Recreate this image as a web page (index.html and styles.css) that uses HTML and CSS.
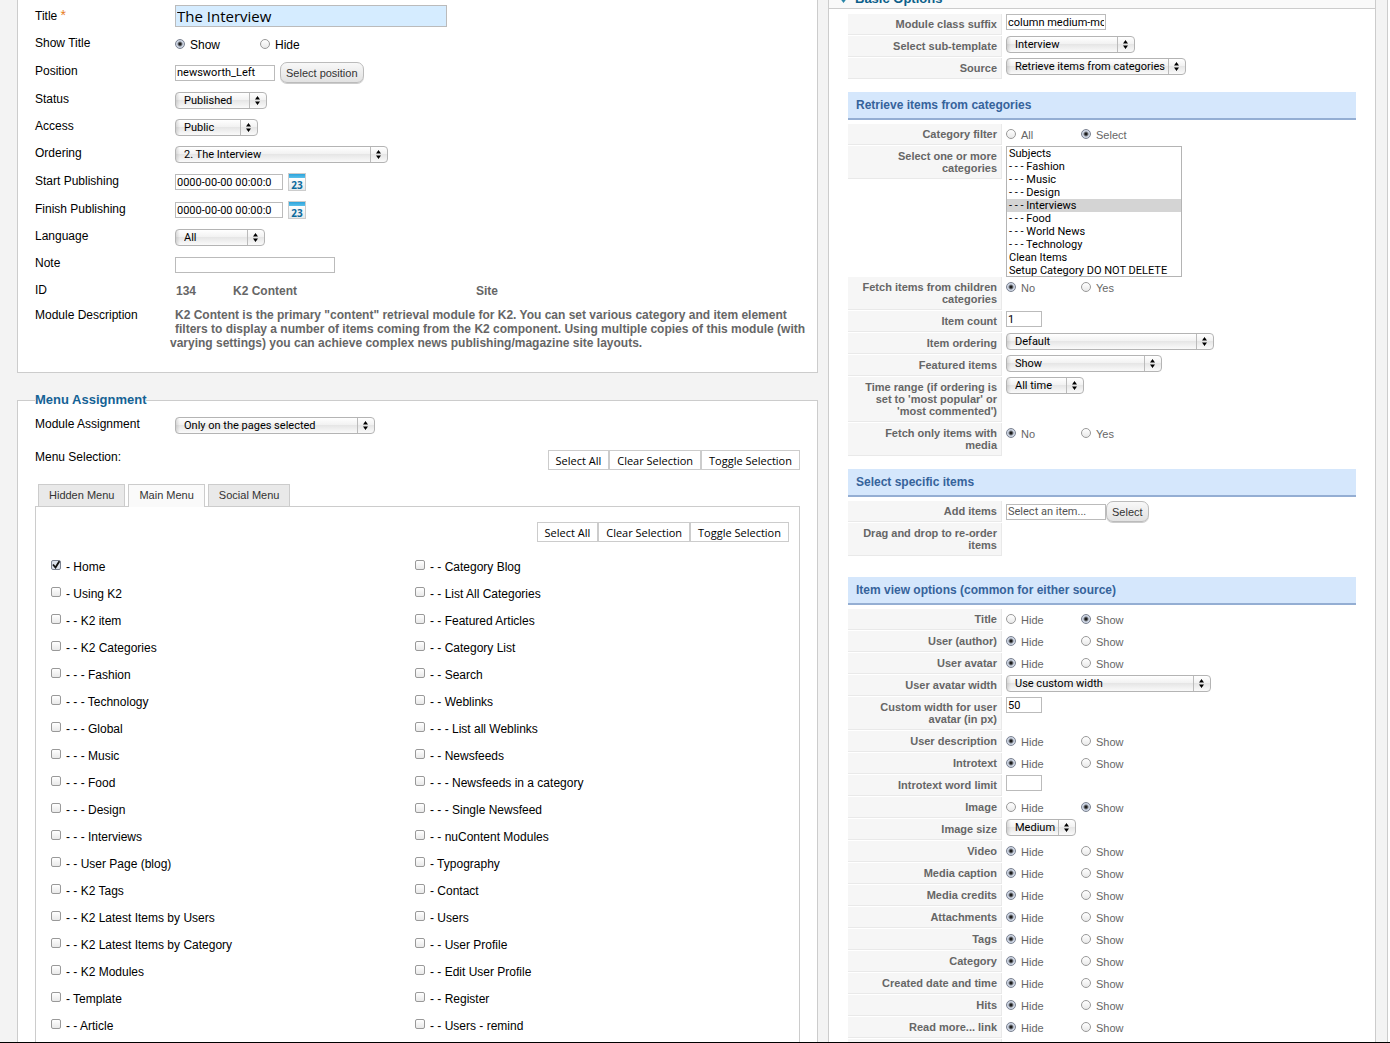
FILE: index.html
```html
<!DOCTYPE html>
<html lang="en">
<head>
  <meta charset="UTF-8" />
  <title>Module Manager - The Interview</title>
  <meta name="viewport" content="width=device-width, initial-scale=1.0" />
  <link rel="stylesheet" href="styles.css">
</head>
<body>
<form class="page">

  <!-- Left column -->
  <div class="col">
    <section class="details">
      <div class="field">
        <label for="title">Title <span class="star">*</span></label>
        <input type="text" id="title" class="text title" value="The Interview">
      </div>
      <div class="field" role="radiogroup" aria-label="Show Title">
        <span class="label">Show Title</span>
        <label class="opt wide"><input type="radio" name="showtitle" checked>Show</label>
        <label class="opt wide"><input type="radio" name="showtitle">Hide</label>
      </div>
      <div class="field tall">
        <label for="position">Position</label>
        <input type="text" id="position" class="text medium" value="newsworth_Left">
        <button type="button" class="btn">Select position</button>
      </div>
      <div class="field">
        <label for="status">Status</label>
        <select id="status" class="w92"><option>Published</option></select>
      </div>
      <div class="field">
        <label for="access">Access</label>
        <select id="access" class="w83"><option>Public</option></select>
      </div>
      <div class="field">
        <label for="ordering">Ordering</label>
        <select id="ordering" class="w213"><option>2. The Interview</option></select>
      </div>
      <div class="field when">
        <label for="start">Start Publishing</label>
        <input type="text" id="start" class="text date" value="0000-00-00 00:00:0">
        <button type="button" class="cal" aria-label="Calendar">23</button>
      </div>
      <div class="field when">
        <label for="finish">Finish Publishing</label>
        <input type="text" id="finish" class="text date" value="0000-00-00 00:00:0">
        <button type="button" class="cal" aria-label="Calendar">23</button>
      </div>
      <div class="field">
        <label for="language">Language</label>
        <select id="language" class="w90"><option>All</option></select>
      </div>
      <div class="field">
        <label for="note">Note</label>
        <input type="text" id="note" class="text note">
      </div>
      <div class="field info">
        <span class="label">ID</span>
        <b class="id">134</b>
        <b class="name">K2 Content</b>
        <b>Site</b>
      </div>
      <div class="desc">
        <span class="desc-label">Module Description</span>
        <p>K2 Content is the primary "content" retrieval module for K2. You can set various category and item element filters to display a number of items coming from the K2 component. Using multiple copies of this module (with varying settings) you can achieve complex news publishing/magazine site layouts.</p>
      </div>
    </section>

    <fieldset class="assignment">
      <legend>Menu Assignment</legend>
      <div class="field">
        <label for="assign">Module Assignment</label>
        <select id="assign" class="w200"><option>Only on the pages selected</option></select>
      </div>
      <div class="selection">
        <span>Menu Selection:</span>
        <div class="toggles">
          <button type="button">Select All</button>
          <button type="button">Clear Selection</button>
          <button type="button">Toggle Selection</button>
        </div>
      </div>

      <nav class="tabs">
        <a href="#hidden">Hidden Menu</a>
        <a href="#main" class="open">Main Menu</a>
        <a href="#social">Social Menu</a>
      </nav>
      <div class="tab-panel" id="main">
        <div class="toggles">
          <button type="button">Select All</button>
          <button type="button">Clear Selection</button>
          <button type="button">Toggle Selection</button>
        </div>
        <div class="menu-links">
          <label><input type="checkbox" checked>- Home</label>
          <label><input type="checkbox">- - Category Blog</label>
          <label><input type="checkbox">- Using K2</label>
          <label><input type="checkbox">- - List All Categories</label>
          <label><input type="checkbox">- - K2 item</label>
          <label><input type="checkbox">- - Featured Articles</label>
          <label><input type="checkbox">- - K2 Categories</label>
          <label><input type="checkbox">- - Category List</label>
          <label><input type="checkbox">- - - Fashion</label>
          <label><input type="checkbox">- - Search</label>
          <label><input type="checkbox">- - - Technology</label>
          <label><input type="checkbox">- - Weblinks</label>
          <label><input type="checkbox">- - - Global</label>
          <label><input type="checkbox">- - - List all Weblinks</label>
          <label><input type="checkbox">- - - Music</label>
          <label><input type="checkbox">- - Newsfeeds</label>
          <label><input type="checkbox">- - - Food</label>
          <label><input type="checkbox">- - - Newsfeeds in a category</label>
          <label><input type="checkbox">- - - Design</label>
          <label><input type="checkbox">- - - Single Newsfeed</label>
          <label><input type="checkbox">- - - Interviews</label>
          <label><input type="checkbox">- - nuContent Modules</label>
          <label><input type="checkbox">- - User Page (blog)</label>
          <label><input type="checkbox">- Typography</label>
          <label><input type="checkbox">- - K2 Tags</label>
          <label><input type="checkbox">- Contact</label>
          <label><input type="checkbox">- - K2 Latest Items by Users</label>
          <label><input type="checkbox">- Users</label>
          <label><input type="checkbox">- - K2 Latest Items by Category</label>
          <label><input type="checkbox">- - User Profile</label>
          <label><input type="checkbox">- - K2 Modules</label>
          <label><input type="checkbox">- - Edit User Profile</label>
          <label><input type="checkbox">- Template</label>
          <label><input type="checkbox">- - Register</label>
          <label><input type="checkbox">- - Article</label>
          <label><input type="checkbox">- - Users - remind</label>
        </div>
      </div>
    </fieldset>
  </div>

  <!-- Right column -->
  <div class="options">
    <h3 class="pane-title"><svg width="9" height="6" viewBox="0 0 9 6"><path d="M0 0h9L4.500 6z" fill="#2a86a8"/></svg>Basic Options</h3>
    <div class="pane">
      <div class="param"><label for="suffix">Module class suffix</label><div><input type="text" id="suffix" class="text medium" value="column medium-module"></div></div>
      <div class="param"><label for="template">Select sub-template</label><div><select id="template" class="w129"><option>Interview</option></select></div></div>
      <div class="param"><label for="source">Source</label><div><select id="source" class="w180"><option>Retrieve items from categories</option></select></div></div>

      <h4>Retrieve items from categories</h4>
      <div class="param" role="radiogroup" aria-label="Category filter"><span class="label">Category filter</span><div><label class="opt"><input type="radio" name="filter">All</label><label class="opt"><input type="radio" name="filter" checked>Select</label></div></div>
      <div class="param"><label for="cats">Select one or more categories</label><div>
        <select id="cats" class="list" multiple size="10">
          <option>Subjects</option>
          <option>- - - Fashion</option>
          <option>- - - Music</option>
          <option>- - - Design</option>
          <option selected>- - - Interviews</option>
          <option>- - - Food</option>
          <option>- - - World News</option>
          <option>- - - Technology</option>
          <option>Clean Items</option>
          <option>Setup Category DO NOT DELETE</option>
        </select></div></div>
      <div class="param flush" role="radiogroup" aria-label="Fetch items from children categories"><span class="label">Fetch items from children categories</span><div><label class="opt"><input type="radio" name="children" checked>No</label><label class="opt"><input type="radio" name="children">Yes</label></div></div>
      <div class="param"><label for="count">Item count</label><div><input type="text" id="count" class="text small" value="1"></div></div>
      <div class="param"><label for="itemorder">Item ordering</label><div><select id="itemorder" class="w208"><option>Default</option></select></div></div>
      <div class="param"><label for="featured">Featured items</label><div><select id="featured" class="w156"><option>Show</option></select></div></div>
      <div class="param"><label for="range">Time range (if ordering is set to 'most popular' or 'most commented')</label><div><select id="range" class="w78"><option>All time</option></select></div></div>
      <div class="param" role="radiogroup" aria-label="Fetch only items with media"><span class="label">Fetch only items with media</span><div><label class="opt"><input type="radio" name="media" checked>No</label><label class="opt"><input type="radio" name="media">Yes</label></div></div>

      <h4>Select specific items</h4>
      <div class="param"><label for="additem">Add items</label><div class="add"><input type="text" id="additem" class="text medium grey" value="Select an item..."><button type="button" class="btn">Select</button></div></div>
      <div class="param sortable"><span class="label">Drag and drop to re-order items</span><div></div></div>

      <h4>Item view options (common for either source)</h4>
      <div class="param" role="radiogroup" aria-label="Title"><span class="label">Title</span><div><label class="opt"><input type="radio" name="v1">Hide</label><label class="opt"><input type="radio" name="v1" checked>Show</label></div></div>
      <div class="param" role="radiogroup" aria-label="User (author)"><span class="label">User (author)</span><div><label class="opt"><input type="radio" name="v2" checked>Hide</label><label class="opt"><input type="radio" name="v2">Show</label></div></div>
      <div class="param" role="radiogroup" aria-label="User avatar"><span class="label">User avatar</span><div><label class="opt"><input type="radio" name="v3" checked>Hide</label><label class="opt"><input type="radio" name="v3">Show</label></div></div>
      <div class="param"><label for="avatar">User avatar width</label><div><select id="avatar" class="w205"><option>Use custom width</option></select></div></div>
      <div class="param"><label for="custom">Custom width for user avatar (in px)</label><div><input type="text" id="custom" class="text small" value="50"></div></div>
      <div class="param" role="radiogroup" aria-label="User description"><span class="label">User description</span><div><label class="opt"><input type="radio" name="v4" checked>Hide</label><label class="opt"><input type="radio" name="v4">Show</label></div></div>
      <div class="param" role="radiogroup" aria-label="Introtext"><span class="label">Introtext</span><div><label class="opt"><input type="radio" name="v5" checked>Hide</label><label class="opt"><input type="radio" name="v5">Show</label></div></div>
      <div class="param"><label for="limit">Introtext word limit</label><div><input type="text" id="limit" class="text small"></div></div>
      <div class="param" role="radiogroup" aria-label="Image"><span class="label">Image</span><div><label class="opt"><input type="radio" name="v6">Hide</label><label class="opt"><input type="radio" name="v6" checked>Show</label></div></div>
      <div class="param"><label for="size">Image size</label><div><select id="size" class="w70"><option>Medium</option></select></div></div>
      <div class="param" role="radiogroup" aria-label="Video"><span class="label">Video</span><div><label class="opt"><input type="radio" name="v7" checked>Hide</label><label class="opt"><input type="radio" name="v7">Show</label></div></div>
      <div class="param" role="radiogroup" aria-label="Media caption"><span class="label">Media caption</span><div><label class="opt"><input type="radio" name="v8" checked>Hide</label><label class="opt"><input type="radio" name="v8">Show</label></div></div>
      <div class="param" role="radiogroup" aria-label="Media credits"><span class="label">Media credits</span><div><label class="opt"><input type="radio" name="v9" checked>Hide</label><label class="opt"><input type="radio" name="v9">Show</label></div></div>
      <div class="param" role="radiogroup" aria-label="Attachments"><span class="label">Attachments</span><div><label class="opt"><input type="radio" name="v10" checked>Hide</label><label class="opt"><input type="radio" name="v10">Show</label></div></div>
      <div class="param" role="radiogroup" aria-label="Tags"><span class="label">Tags</span><div><label class="opt"><input type="radio" name="v11" checked>Hide</label><label class="opt"><input type="radio" name="v11">Show</label></div></div>
      <div class="param" role="radiogroup" aria-label="Category"><span class="label">Category</span><div><label class="opt"><input type="radio" name="v12" checked>Hide</label><label class="opt"><input type="radio" name="v12">Show</label></div></div>
      <div class="param" role="radiogroup" aria-label="Created date and time"><span class="label">Created date and time</span><div><label class="opt"><input type="radio" name="v13" checked>Hide</label><label class="opt"><input type="radio" name="v13">Show</label></div></div>
      <div class="param" role="radiogroup" aria-label="Hits"><span class="label">Hits</span><div><label class="opt"><input type="radio" name="v14" checked>Hide</label><label class="opt"><input type="radio" name="v14">Show</label></div></div>
      <div class="param" role="radiogroup" aria-label="Read more... link"><span class="label">Read more... link</span><div><label class="opt"><input type="radio" name="v15" checked>Hide</label><label class="opt"><input type="radio" name="v15">Show</label></div></div>
      <div class="param"><span class="label"></span><div></div></div>
    </div>
  </div>

</form>
</body>
</html>
```

FILE: styles.css
```css
* {
  box-sizing: border-box;
}

body {
  margin: 0;
  height: 100vh;
  overflow: hidden;
  border-bottom: 1px solid #000;
  background: #fff;
  color: #000;
  font-family: "Liberation Sans", Arial, sans-serif;
  font-size: 12px;
}

.page {
  display: grid;
  grid-template-columns: 801fr 548fr;
  gap: 10px;
  margin-right: 2px;
  padding: 0 11px 0 17px;
  min-height: 100%;
  background: #f3f3f3;
  border-right: 1px solid #ccc;
}

.col {
  display: flex;
  flex-direction: column;
}

/* Form controls */
input, select {
  margin: 0;
  font-family: Roboto, "Open Sans", sans-serif;
  font-size: 11px;
  color: #000;
}

.text {
  height: 16px;
  padding: 0 1px;
  border: 1px solid #bbb;
  background: #fff;
  border-radius: 0;
}

.medium { width: 100px; }
.small { width: 36px; }
.date { width: 108px; }
.note { width: 160px; }
.grey { color: #555; }

.title {
  width: 272px;
  height: 22px;
  margin-bottom: 4px;
  font-family: "Open Sans", "Noto Sans", sans-serif;
  font-size: 15px;
  background: #d5ecff;
}

select {
  appearance: none;
  height: 17px;
  padding: 0 17px 0 8px;
  border: 1px solid #b4b4b4;
  border-radius: 4px;
  line-height: 14px;
  background:
    url("data:image/svg+xml,%3Csvg xmlns='http://www.w3.org/2000/svg' width='17' height='15'%3E%3Cpath d='M.5 0v15' stroke='%23bbb'/%3E%3Cpath d='M6 6.500l2.500-3.500L11 6.500zM6 8.500h5L8.500 12z'/%3E%3C/svg%3E") right center no-repeat,
    linear-gradient(to right, rgba(0,0,0,0.12), rgba(0,0,0,0) 4px),
    linear-gradient(#fff, #f2f2f2 45%, #e6e6e6 50%, #fafafa);
}

.w70 { width: 70px; }
.w78 { width: 78px; }
.w83 { width: 83px; }
.w90 { width: 90px; }
.w92 { width: 92px; }
.w129 { width: 129px; }
.w156 { width: 156px; }
.w180 { width: 180px; }
.w200 { width: 200px; }
.w205 { width: 205px; }
.w208 { width: 208px; }
.w213 { width: 213px; }

.list {
  display: block;
  width: 176px;
  height: 131px;
  padding: 0;
  border: 1px solid #b4b4b4;
  border-radius: 0;
  background: #fff;
  overflow: hidden;
}

.list option {
  height: 13px;
  min-height: 13px;
  padding: 0 2px;
  line-height: 13px;
}

.list option:checked {
  background: #d4d4d4 linear-gradient(#d4d4d4, #d4d4d4);
  color: #000;
}

input[type="radio"],
input[type="checkbox"] {
  appearance: none;
  flex: none;
  width: 10px;
  height: 10px;
  border: 1px solid #999;
  background: linear-gradient(#fff, #e9e9e9);
}

input[type="radio"] {
  border-radius: 50%;
}

input[type="radio"]:checked {
  border-color: #7b8291;
  background: radial-gradient(circle, #111 0, #222 1px, #d0d8e6 3px, #c5cddc);
}

input[type="checkbox"] {
  border-radius: 2px;
}

input[type="checkbox"]:checked {
  border-color: #7b8291;
  background: #dbe1ec url("data:image/svg+xml,%3Csvg xmlns='http://www.w3.org/2000/svg' width='8' height='8'%3E%3Cpath d='M1 3.500l2.500 3L7.500 0' fill='none' stroke='%23111' stroke-width='1.800'/%3E%3C/svg%3E") center no-repeat;
}

.btn {
  height: 21px;
  padding: 0 5px;
  border: 1px solid #bbb;
  border-radius: 7px;
  background: linear-gradient(#f8f8f8, #e2e2e2);
  box-shadow: 0 1px 0 #ccc;
  font-family: inherit;
  font-size: 11px;
  color: #333;
}

/* Details */
.details {
  padding: 4px 10px 22px 17px;
  background: #fff;
  border: 1px solid #ccc;
  border-top: 0;
}

.field {
  display: flex;
  align-items: center;
  min-height: 27px;
}

.field.tall {
  min-height: 29px;
}

.field.when {
  min-height: 28px;
}

.field.info {
  min-height: 26px;
}

.field > label:first-child,
.field > .label {
  width: 140px;
  padding-bottom: 3px;
}

.star {
  font-size: 14px;
  line-height: 10px;
  color: #e77e23;
}

.opt {
  display: flex;
  align-items: center;
  gap: 5px;
  width: 75px;
}

.opt.wide {
  width: 85px;
}

.opt.wide input {
  margin-bottom: 2px;
}

.field .btn,
.cal {
  margin-left: 5px;
}

.cal {
  width: 18px;
  height: 18px;
  padding: 5px 0 0;
  border: 1px solid #ccc;
  background: linear-gradient(#2ba3dc 0, #5cc0ea 4px, #fff 4px, #e4e9ec);
  font: bold 10px/10px "Open Sans", sans-serif;
  color: #0b6a9c;
}

.info b {
  color: #666;
}

.info .id {
  width: 58px;
  padding-left: 1px;
}

.info .name {
  width: 243px;
}

.desc {
  padding-top: 4px;
  line-height: 14px;
}

/* the label floats, so the third line runs back under it */
.desc-label {
  float: left;
  width: 140px;
  height: 28px;
}

.desc p {
  margin: 0 0 0 135px;
  color: #666;
  font-weight: bold;
}

/* Menu assignment */
.assignment {
  flex: 1;
  min-width: 0;
  margin: 19px 0 0;
  padding: 4px 17px 0;
  background: #fff;
  border: 1px solid #ccc;
  border-bottom: 0;
}

.assignment legend {
  padding: 0;
  font-size: 13px;
  line-height: 16px;
  font-weight: bold;
  color: #146295;
}

.selection {
  display: flex;
  justify-content: space-between;
  margin-top: 11px;
}

.toggles {
  display: flex;
  justify-content: flex-end;
}

.toggles button {
  height: 20px;
  padding: 0 7px;
  border: 1px solid #ccc;
  background: #fff;
  font-family: "Open Sans", "Noto Sans", sans-serif;
  font-size: 11px;
  color: #000;
}

.tabs {
  display: flex;
  gap: 3px;
  margin: 14px 0 -1px 3px;
}

.tabs a {
  padding: 0 10px;
  border: 1px solid #ccc;
  border-bottom: 0;
  background: #e9e9e9;
  font-size: 11px;
  line-height: 21px;
  color: #333;
  text-decoration: none;
  margin-bottom: 1px;
}

.tabs .open {
  margin-bottom: 0;
  padding-bottom: 1px;
  background: #fafafa;
  z-index: 1;
}

.tab-panel {
  padding: 15px 10px 20px 15px;
  border: 1px solid #ccc;
  border-bottom: 0;
}

.menu-links {
  display: grid;
  grid-template-columns: 364fr 374fr;
  margin-top: 11px;
}

.menu-links label {
  display: flex;
  align-items: center;
  gap: 5px;
  height: 27px;
}

.menu-links input {
  margin-bottom: 3px;
}

/* Basic options */
.options {
  background: #fff;
  border: 1px solid #ccc;
  border-width: 0 1px;
}

.pane-title {
  margin: -11px 0 0;
  padding-left: 10px;
  border-bottom: 1px solid #ccc;
  background: #f9f9f9;
  font-size: 13px;
  line-height: 19px;
  color: #0b5f8a;
}

.pane-title svg {
  margin-right: 7px;
}

.pane {
  padding: 5px 19px 0;
}

.pane h4 {
  margin: 13px 0 4px;
  padding: 0 8px;
  border-bottom: 2px solid #94aed3;
  background: #d5e7fc;
  font-size: 12px;
  line-height: 26px;
  color: #35639b;
}

.param {
  display: flex;
  align-items: flex-start;
  gap: 4px;
  margin-bottom: 1px;
  font-size: 11px;
  line-height: 12px;
  color: #666;
}

.param > label,
.param > .label {
  flex: none;
  width: 154px;
  min-height: 21px;
  padding: 4px 4px 4px 10px;
  border: 1px solid #e9e9e9;
  border-width: 0 1px 1px 0;
  background: #f6f6f6;
  font-weight: bold;
  text-align: right;
}

.param > div {
  display: flex;
}

.param .opt {
  padding-top: 5px;
}

.param .opt input {
  margin-bottom: 2px;
}

.param.flush {
  margin-top: -1px;
}

.param .add {
  align-items: center;
  height: 21px;
}

.sortable {
  margin-bottom: 21px;
}
```
